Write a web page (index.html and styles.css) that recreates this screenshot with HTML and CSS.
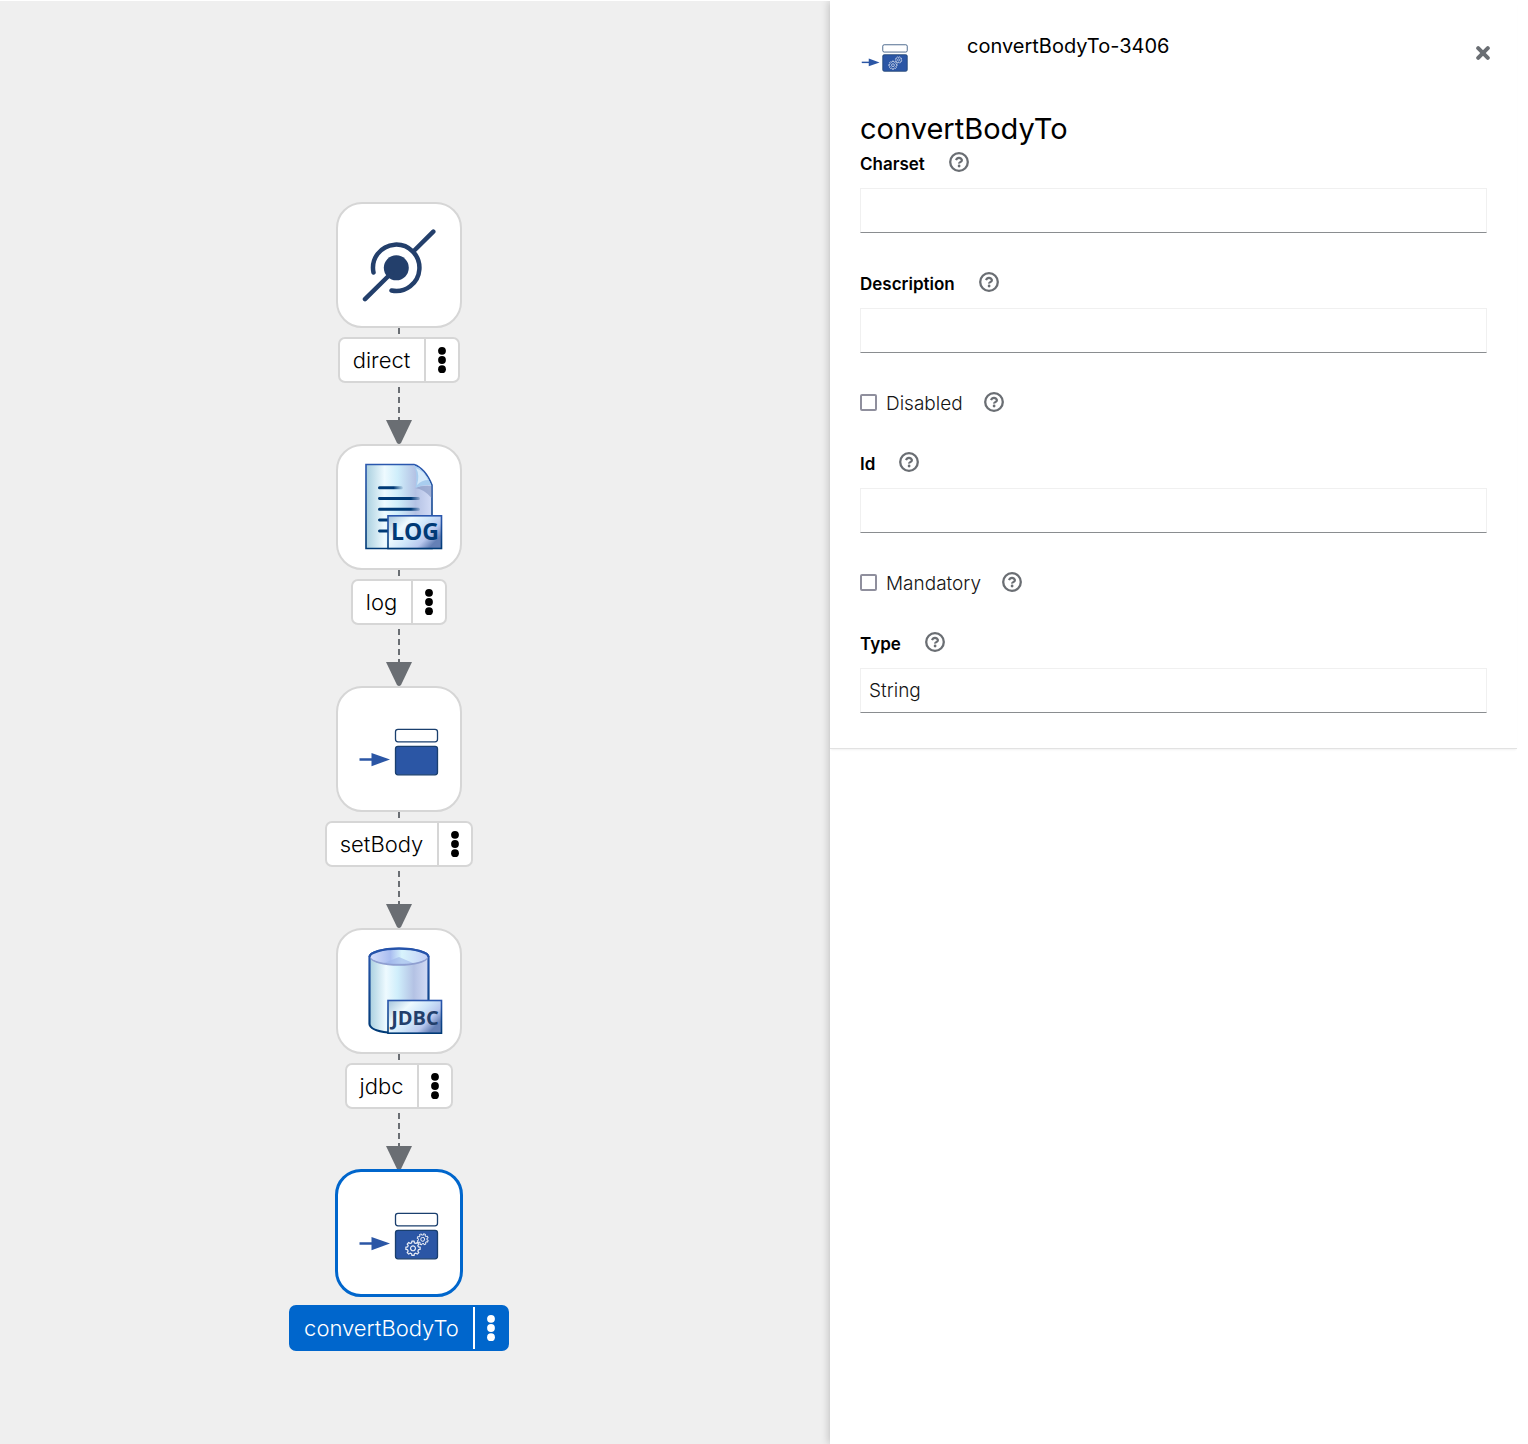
FILE: index.html
```html
<!DOCTYPE html>
<html lang="en">
<head>
<meta charset="utf-8">
<meta name="viewport" content="width=device-width, initial-scale=1">
<title>Integration steps</title>
<link rel="stylesheet" href="styles.css">
</head>
<body>
<svg class="defs" width="0" height="0" aria-hidden="true">
  <defs>
    <linearGradient id="glass" x1="0" x2="1" y1="0" y2="0">
      <stop offset="0" stop-color="#a9cfdf"/><stop offset="0.28" stop-color="#eefaff"/>
      <stop offset="0.48" stop-color="#cfeefb"/><stop offset="0.75" stop-color="#b4c2e4"/>
      <stop offset="1" stop-color="#d3dcf6"/>
    </linearGradient>
    <linearGradient id="badge" x1="0" x2="1" y1="0" y2="0.6">
      <stop offset="0" stop-color="#a4c4dc"/><stop offset="0.35" stop-color="#eefaff"/>
      <stop offset="0.6" stop-color="#cfe6fa"/><stop offset="0.82" stop-color="#b9c8ee"/>
      <stop offset="1" stop-color="#6580b6"/>
    </linearGradient>
    <linearGradient id="lid" x1="0" x2="1" y1="0" y2="0">
      <stop offset="0" stop-color="#d5defa"/><stop offset="0.35" stop-color="#a9bdf0"/>
      <stop offset="0.55" stop-color="#d8f4fd"/><stop offset="1" stop-color="#c1cef5"/>
    </linearGradient>
    <linearGradient id="edge" x1="0" x2="0" y1="0" y2="1">
      <stop offset="0" stop-color="#2a57ae"/><stop offset="1" stop-color="#003a76"/>
    </linearGradient>
    <linearGradient id="ink" gradientUnits="userSpaceOnUse" x1="42" x2="86" y1="0" y2="0">
      <stop offset="0.75" stop-color="#003a76"/><stop offset="1" stop-color="#003a76" stop-opacity="0"/>
    </linearGradient>
    <linearGradient id="ink-short" gradientUnits="userSpaceOnUse" x1="42" x2="68" y1="0" y2="0">
      <stop offset="0.6" stop-color="#003a76"/><stop offset="1" stop-color="#003a76" stop-opacity="0"/>
    </linearGradient>
    <g id="set-body">
      <path d="M23.500 73.500h13" stroke="#2b56a5" stroke-width="2.500"/>
      <path d="M35.500 67l18.500 6.500-18.500 6.700z" fill="#2b56a5"/>
      <rect x="59.500" y="43.300" width="42" height="12.500" rx="2.500" fill="#fff" stroke="#1a3f6e" stroke-width="1.300"/>
      <rect x="59.500" y="60.300" width="42" height="28.500" rx="2.500" fill="#2b56a5" stroke="#1a3f6e" stroke-width="1.300"/>
    </g>
    <path id="gear" d="M7.570-1.890L9.880-1.560V1.560L7.570 1.890 6.690 4.020 8.090 5.880 5.880 8.090 4.020 6.690 1.890 7.570 1.560 9.880H-1.560L-1.890 7.570-4.020 6.690-5.880 8.090-8.090 5.880-6.690 4.020-7.570 1.890-9.880 1.560V-1.560L-7.570-1.890-6.690-4.020-8.090-5.880-5.880-8.090-4.020-6.690-1.890-7.570-1.560-9.880H1.560L1.890-7.570 4.020-6.690 5.880-8.090 8.090-5.880 6.690-4.020zM3.400 0A3.400 3.400 0 1 0-3.400 0 3.400 3.400 0 1 0 3.400 0z" fill="none" stroke="#e9edf6" stroke-width="1.700" stroke-linejoin="round"/>
    <g id="convert-body">
      <use href="#set-body"/>
      <use href="#gear" transform="translate(77 78.300) scale(.72)"/>
      <use href="#gear" transform="translate(86.700 69.300) rotate(20) scale(.56)"/>
    </g>
    <g id="dots"><circle cx="5" cy="4.800" r="3.900"/><circle cx="5" cy="14" r="3.900"/><circle cx="5" cy="23.200" r="3.900"/></g>
    <g id="arrow">
      <path d="M13 0v38" stroke="#6a6e73" stroke-width="2" stroke-dasharray="6 4" stroke-dashoffset="6"/>
      <path d="M0 37h26l-11 23q-2 2-4 0z" fill="#6a6e73"/>
    </g>
    <g id="help">
      <circle cx="10" cy="10" r="8.800" fill="none" stroke="#6a6e73" stroke-width="2.300"/>
      <path d="M7 8.100Q7.800 5.900 10 5.900T13 8.100Q13 9.300 11.500 10T10.100 11.700" fill="none" stroke="#6a6e73" stroke-width="2.100"/>
      <circle cx="10.100" cy="14" r="1.400" fill="#6a6e73"/>
    </g>
  </defs>
</svg>

<main class="workspace">
  <section class="canvas" aria-label="Integration">
    <ol class="steps">
      <li class="step">
        <button class="node" type="button" aria-label="Open direct">
          <svg class="art" viewBox="0 0 126 126" fill="none" stroke="#233f6b" stroke-width="4.500" stroke-linecap="round">
            <circle cx="60.300" cy="65.800" r="12.500" fill="#233f6b" stroke="none"/>
            <path d="M37.500 70.500A23.200 23.200 0 1 1 55.500 88.500M29 97.200L56 70.500M78.300 48.500L97.300 29.700"/>
          </svg>
        </button>
        <span class="stub"></span>
        <div class="tag"><span class="name">direct</span><button class="more" type="button" aria-label="direct menu"><svg width="10" height="28"><use href="#dots"/></svg></button></div>
        <svg class="link" width="26" height="61"><use href="#arrow"/></svg>
      </li>
      <li class="step">
        <button class="node" type="button" aria-label="Open log">
          <svg class="art" viewBox="0 0 126 126">
            <path d="M30 20.500H78Q89 24 96 41V104.500H30z" fill="url(#glass)" stroke="url(#edge)" stroke-width="1.600"/>
            <path d="M79 44Q87 41 95.500 42V54Q88 45 79 44z" fill="#8294bf" opacity=".6"/>
            <path d="M77.500 21Q82 28 79.500 44 87 40 95.500 41.500 89 25 77.500 21z" fill="#a9cdef"/>
            <path d="M80 24Q84 31 81 41 86 36 92 36 88 27 80 24z" fill="#d4e9fa"/>
            <g fill="none" stroke-width="3" stroke-linecap="round">
              <path d="M43.500 43.700l22 .010" stroke="url(#ink-short)"/>
              <path d="M43.500 54.500l39 .010M43.500 65.200l39 .010M43.500 76l10 .010M43.500 87l10 .010" stroke="url(#ink)"/>
            </g>
            <rect x="52" y="71.800" width="53.500" height="32.700" fill="url(#badge)" stroke="url(#edge)" stroke-width="1.600"/>
            <text class="badge-log" x="79" y="95.700">LOG</text>
          </svg>
        </button>
        <span class="stub"></span>
        <div class="tag"><span class="name">log</span><button class="more" type="button" aria-label="log menu"><svg width="10" height="28"><use href="#dots"/></svg></button></div>
        <svg class="link" width="26" height="61"><use href="#arrow"/></svg>
      </li>
      <li class="step">
        <button class="node" type="button" aria-label="Open setBody">
          <svg class="art" viewBox="0 0 126 126"><use href="#set-body"/></svg>
        </button>
        <span class="stub"></span>
        <div class="tag"><span class="name">setBody</span><button class="more" type="button" aria-label="setBody menu"><svg width="10" height="28"><use href="#dots"/></svg></button></div>
        <svg class="link" width="26" height="61"><use href="#arrow"/></svg>
      </li>
      <li class="step">
        <button class="node" type="button" aria-label="Open jdbc">
          <svg class="art" viewBox="0 0 126 126">
            <path d="M33.500 29V96Q34 102.500 52 104.500H80Q92.500 101 92.500 96V29A29.500 8.300 0 0 0 33.500 29z" fill="url(#glass)" stroke="url(#edge)" stroke-width="2.200"/>
            <ellipse cx="63" cy="30" rx="28.500" ry="7.800" fill="#8f9fd0"/>
            <ellipse cx="63" cy="28.500" rx="28.500" ry="7.300" fill="url(#lid)"/>
            <path d="M63 29L48 35Q62 37.500 77 35z" fill="#9fb6ea" opacity=".6"/>
            <path d="M33.500 29A29.500 8.300 0 0 1 92.500 29" fill="none" stroke="#2553aa" stroke-width="2.200"/>
            <rect x="52" y="72.500" width="53.500" height="32.700" fill="url(#badge)" stroke="url(#edge)" stroke-width="1.600"/>
            <text class="badge-jdbc" x="79" y="97">JDBC</text>
          </svg>
        </button>
        <span class="stub"></span>
        <div class="tag"><span class="name">jdbc</span><button class="more" type="button" aria-label="jdbc menu"><svg width="10" height="28"><use href="#dots"/></svg></button></div>
        <svg class="link" width="26" height="61"><use href="#arrow"/></svg>
      </li>
      <li class="step selected">
        <button class="node" type="button" aria-label="Open convertBodyTo">
          <svg class="art" viewBox="0 0 126 126"><use href="#convert-body"/></svg>
        </button>
        <span class="stub"></span>
        <div class="tag"><span class="name">convertBodyTo</span><button class="more" type="button" aria-label="convertBodyTo menu"><svg width="10" height="28"><use href="#dots"/></svg></button></div>
      </li>
    </ol>
  </section>

  <aside class="panel">
    <div class="details">
      <header class="head">
        <svg class="logo" viewBox="23 42 79 48" width="47" height="28" aria-hidden="true"><use href="#convert-body"/></svg>
        <span class="step-id">convertBodyTo-3406</span>
        <button class="close" type="button" aria-label="Close">
          <svg width="14" height="14" viewBox="0 0 14 14"><path d="M2.200 2.200l9.600 9.600M11.800 2.200l-9.600 9.600" stroke="#6a6e73" stroke-width="4" stroke-linecap="round"/></svg>
        </button>
      </header>
      <h1 class="title">convertBodyTo</h1>
      <form class="form">
        <div class="field">
          <div class="row"><label class="label" for="charset">Charset</label><button class="help" type="button" aria-label="About Charset"><svg width="20" height="20"><use href="#help"/></svg></button></div>
          <input class="text" id="charset" type="text">
        </div>
        <div class="field">
          <div class="row"><label class="label" for="description">Description</label><button class="help" type="button" aria-label="About Description"><svg width="20" height="20"><use href="#help"/></svg></button></div>
          <input class="text" id="description" type="text">
        </div>
        <div class="row">
          <input class="check" id="disabled" type="checkbox"><label class="option" for="disabled">Disabled</label><button class="help" type="button" aria-label="About Disabled"><svg width="20" height="20"><use href="#help"/></svg></button>
        </div>
        <div class="field">
          <div class="row"><label class="label" for="id">Id</label><button class="help" type="button" aria-label="About Id"><svg width="20" height="20"><use href="#help"/></svg></button></div>
          <input class="text" id="id" type="text">
        </div>
        <div class="row">
          <input class="check" id="mandatory" type="checkbox"><label class="option" for="mandatory">Mandatory</label><button class="help" type="button" aria-label="About Mandatory"><svg width="20" height="20"><use href="#help"/></svg></button>
        </div>
        <div class="field">
          <div class="row"><label class="label" for="type">Type</label><button class="help" type="button" aria-label="About Type"><svg width="20" height="20"><use href="#help"/></svg></button></div>
          <input class="text" id="type" type="text" value="String">
        </div>
      </form>
    </div>
  </aside>
</main>
</body>
</html>
```

FILE: styles.css
```css
* { box-sizing: border-box; }

body {
  margin: 0;
  background: #fff;
  color: #000;
  font-family: Inter, "Open Sans", sans-serif;
}

button {
  padding: 0;
  border: 0;
  background: none;
  font: inherit;
  cursor: pointer;
}

svg { display: block; }

.defs { position: absolute; }

.workspace {
  display: grid;
  grid-template-columns: 415fr 349fr;
  min-height: 100vh;
  padding-top: 1px;
}

/* Step graph */
.canvas {
  padding: 201px 32px 80px 0;
  background: #efefef;
}

.steps {
  margin: 0;
  padding: 0;
  list-style: none;
}

.step {
  display: flex;
  flex-direction: column;
  align-items: center;
}

.node {
  display: grid;
  place-items: center;
  width: 126px;
  height: 126px;
  border: 2px solid #d6d6d6;
  border-radius: 26px;
  background: #fff;
}

.art {
  width: 126px;
  height: 126px;
  margin: -2px;
}

.stub {
  width: 2px;
  height: 6px;
  margin-bottom: 3px;
  background: #6a6e73;
}

.tag {
  display: flex;
  height: 46px;
  border: 2px solid #d6d6d6;
  border-radius: 7px;
  background: #fff;
  font-size: 22px;
  font-weight: 300;
  line-height: 42px;
}

.name { padding: 0 14px 0 13px; }

.more {
  display: grid;
  place-items: center;
  width: 34px;
  border-left: 2px solid #d6d6d6;
}

.selected .node {
  width: 128px;
  height: 128px;
  margin: -1px;
  border: 3px solid #06c;
}

.selected .stub { background: none; }

.selected .tag {
  border-color: #06c;
  background: #06c;
  color: #fff;
}

.selected .more {
  border-color: #fff;
  fill: #fff;
}

.badge-log,
.badge-jdbc {
  font-family: "Open Sans", sans-serif;
  font-weight: 700;
  text-anchor: middle;
}

.badge-log {
  fill: #003a76;
  font-size: 23px;
}

.badge-jdbc {
  fill: #233f6b;
  font-size: 20px;
}

/* Step details */
.panel {
  padding-right: 11px;
  background: #fff;
  box-shadow: -1px 0 8px rgba(0, 0, 0, 0.2);
  clip-path: inset(0 0 0 -16px);
}

.details {
  padding: 27px 30px 35px;
  border-bottom: 1px solid #e2e2e2;
  box-shadow: 0 2px 2px -1px rgba(0, 0, 0, 0.06);
}

.head {
  display: flex;
  align-items: flex-start;
  height: 80px;
}

.logo { margin: 16px 59px 0 1px; }

.step-id {
  flex: 1;
  font-size: 20px;
  line-height: 36px;
}

.close {
  padding: 18px 0 0;
  margin-right: -3px;
}

.title {
  margin: 0;
  font-size: 29px;
  font-weight: 400;
  line-height: 41px;
}

.form {
  display: grid;
  gap: 36px;
}

.row {
  display: flex;
  align-items: center;
  height: 24px;
  padding-top: 2px;
}

.label {
  padding-top: 4px;
  font-size: 17px;
  font-weight: 600;
  line-height: 20px;
}

.option {
  padding-top: 4px;
  color: #151515;
  font-size: 19px;
  font-weight: 300;
  line-height: 22px;
}

.help { margin-left: 24px; }

.option + .help { margin-left: 21px; }

.text {
  display: block;
  width: 100%;
  height: 45px;
  margin-top: 15px;
  padding: 0 8px;
  border: 1px solid #f0f0f0;
  border-bottom-color: #8a8d90;
  border-radius: 0;
  background: #fff;
  color: #151515;
  font-family: inherit;
  font-size: 19px;
  font-weight: 300;
}

.check {
  appearance: none;
  width: 17px;
  height: 17px;
  margin: 0 9px 0 0;
  border: 2px solid #8f8f9d;
  border-radius: 2px;
  background: #fff;
}
```
